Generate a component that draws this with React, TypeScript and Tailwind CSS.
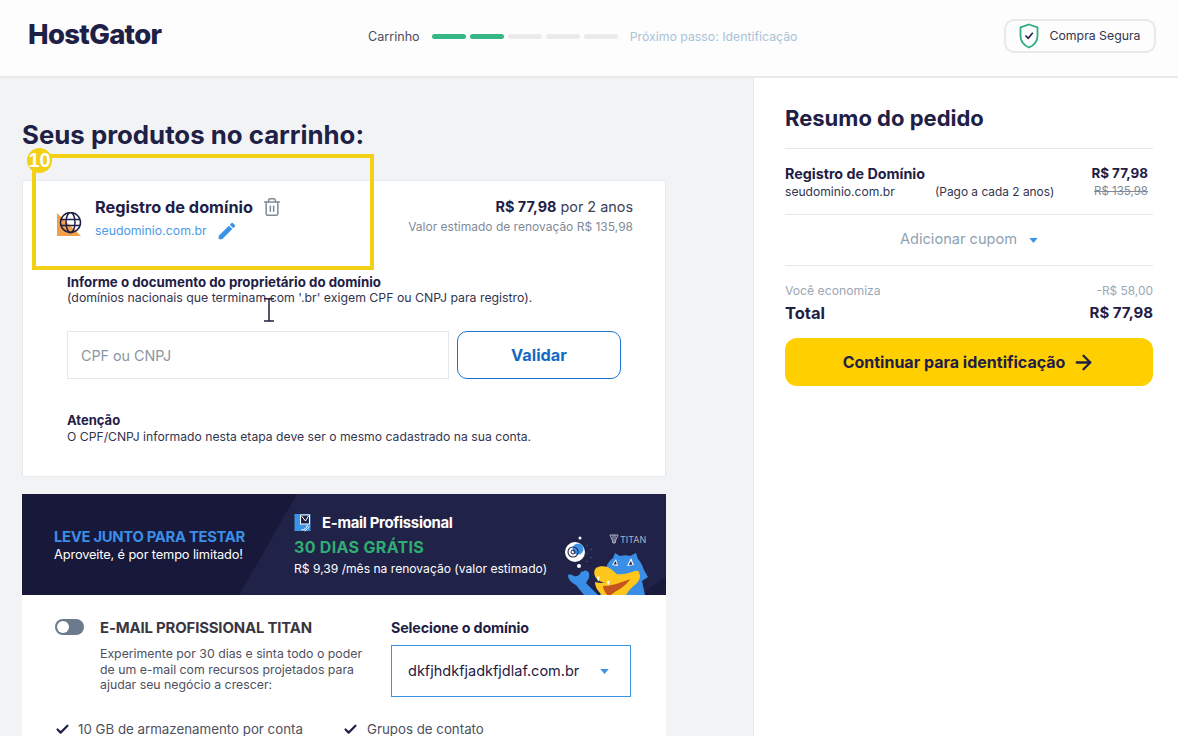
import React from 'react';
import { Check, ArrowRight, Trash2 } from 'lucide-react';

const navy = 'text-[#1f2045]';

function Caret({ className }: { className: string }) {
  return (
    <svg viewBox="0 0 10 6" className={className}>
      <path d="M0 0h10L5 6z" fill="#3b93e8" />
    </svg>
  );
}

function ShieldIcon() {
  return (
    <svg viewBox="0 0 20 26" className="w-[20px] h-[26px]" fill="none" stroke="#2fae7f" strokeWidth="1.8">
      <path d="M10 1.500 18.500 4.500V13C18.500 18.500 14.500 22.500 10 24.500 5.500 22.500 1.500 18.500 1.500 13V4.500Z" />
      <path d="M6.500 12.500 9.200 15.200 13.800 9.800" stroke="#1f2045" strokeWidth="1.600" />
    </svg>
  );
}

function GlobeIcon() {
  return (
    <svg viewBox="0 0 26 26" className="w-[26px] h-[26px] shrink-0 mt-[15px]">
      <path d="M0 1 24 24H0Z" fill="#f0a04b" />
      <g fill="none" stroke="#1f2045" strokeWidth="1.500">
        <circle cx="13.500" cy="10.500" r="10" />
        <ellipse cx="13.500" cy="10.500" rx="4.500" ry="10" />
        <path d="M4 7.500h19M4 13.500h19" />
      </g>
    </svg>
  );
}

function EditIcon() {
  return (
    <svg viewBox="0 0 24 24" className="w-[22px] h-[22px]" fill="#3b93e8">
      <path d="M3 17.250V21h3.750L17.810 9.940l-3.750-3.750L3 17.250zM20.710 7.040a1 1 0 000-1.410l-2.340-2.340a1 1 0 00-1.410 0l-1.830 1.830 3.750 3.750 1.830-1.830z" />
    </svg>
  );
}

function MailIcon() {
  return (
    <svg viewBox="0 0 16 18" className="w-[17px] h-[18px]">
      <rect x="0" y="0" width="16" height="17" fill="#3b93e8" />
      <rect x="6" y="1" width="9" height="9" fill="#1f2045" stroke="#fff" strokeWidth="1" />
      <path d="M7 2l4 5 3-5" fill="none" stroke="#fff" strokeWidth="1" />
      <path d="M7 16c3 0 5-2 6-5M10 17c2-1 4-3 5-5" fill="none" stroke="#fff" strokeWidth="1" />
    </svg>
  );
}

// desenho do mascote, coordenadas em px a partir de (540, 500) da tela
function Gator() {
  return (
    <svg viewBox="0 0 126 95" className="w-[126px] h-[95px]">
      <path d="M126 77 100 95H126Z" fill="#191a3c" />
      {/* bolha do e-mail */}
      <circle cx="40" cy="38" r="1.500" fill="#fff" />
      <circle cx="35" cy="52" r="10" fill="#fff" />
      <circle cx="38" cy="49" r="5.500" fill="#3b93e8" />
      <circle cx="33" cy="52" r="5" fill="none" stroke="#1f2045" strokeWidth="1.100" />
      <circle cx="33" cy="52" r="2" fill="none" stroke="#1f2045" strokeWidth="1" />
      <circle cx="39" cy="66" r="2" fill="#fff" />
      <path d="M47 45v1M51 49v1M47 53v1M51 57v1M47 61v1" stroke="#6a6f90" strokeWidth="1" />
      {/* braço e corpo */}
      <path d="M28 75c2-1 4 0 6 1 3 1 6-1 7-4 1-1 2 0 3-1 2-1 4 0 5 2 1 4-1 7-3 10l12 12H44L36 85c-4-2-8-5-8-10Z" fill="#3b8ee6" />
      <path d="M66 68c1-4 4-8 7-10l2-5 5 3c4-1 7-1 10 0l6-3 2 6c3 3 5 8 6 11l4 7-6 4 3 14H60Z" fill="#3b8ee6" />
      {/* olhos */}
      <path d="M72 65l4-6 2 7Z" fill="#fff" />
      <path d="M73.500 64.500l2.200-3.500 1 3.500Z" fill="#1f2045" />
      <path d="M94 65l-3-7-4 8Z" fill="#fff" />
      <path d="M92.500 64.500l-1.700-3.500-2 4Z" fill="#1f2045" />
      {/* boca */}
      <path d="M55 82c6 2 14 1 24-3 8-3 14-5 20-6 2 3 1 7-3 11-4 3-7 6-10 11H62c-4-4-7-8-7-13Z" fill="#ffc61e" />
      <path d="M63 86c8 0 18-3 28-8-3 5-7 8-11 11-4 2-7 4-9 6h-4c-2-3-4-6-4-9Z" fill="#c4561d" />
      <path d="M56 68c3-2 8-2 11-1 4 1 7 5 10 7 6 1 12-1 18-3 3-1 5 1 4 3-3 3-10 6-18 8-9 2-18 2-23-2-4-3-5-9-2-12Z" fill="#ffc61e" />
      <path d="M57 76l1 6 2-5ZM67 81l1 5 2-5Z" fill="#fff" />
    </svg>
  );
}

function TitanLogo() {
  return (
    <div className="flex items-center gap-[1px] text-[9px] leading-none text-[#aeb3c6]">
      <svg viewBox="0 0 10 10" className="w-[10px] h-[10px]" fill="none" stroke="#aeb3c6" strokeWidth="1">
        <path d="M1 1h8L7 5.500 6 9H4L3 5.500ZM4 1v8M6 1v8" />
      </svg>
      TITAN
    </div>
  );
}

function Highlight() {
  return (
    <div className="absolute left-[32px] top-[154px] w-[342px] h-[116px] border-[4px] border-[#f2d014] pointer-events-none">
      <span className="absolute left-[-9px] top-[-10px] w-[25px] h-[25px] rounded-full bg-[#f2d014] text-white text-[20px] leading-[25px] text-center font-bold font-['Liberation_Sans',sans-serif]">
        10
      </span>
    </div>
  );
}

function IBeam() {
  return (
    <svg viewBox="0 0 14 24" className="absolute left-[262px] top-[298px] w-[14px] h-[24px]" fill="none" stroke="#1f2045" strokeWidth="1.500">
      <path d="M2 .8h10M7 .8v22M2 23h10" />
    </svg>
  );
}

function Steps() {
  return (
    <div className="flex items-center gap-[12px] mt-[-2px]">
      <span className="text-[12.600px] text-[#4a4b5c]">Carrinho</span>
      <div className="flex gap-[4px]">
        <span className="w-[34px] h-[5px] rounded-full bg-[#36b886]" />
        <span className="w-[34px] h-[5px] rounded-full bg-[#36b886]" />
        <span className="w-[34px] h-[5px] rounded-full bg-[#ebebeb]" />
        <span className="w-[34px] h-[5px] rounded-full bg-[#ebebeb]" />
        <span className="w-[34px] h-[5px] rounded-full bg-[#ebebeb]" />
      </div>
      <span className="text-[12.300px] text-[#a9c3d6]">Próximo passo: Identificação</span>
    </div>
  );
}

function DomainCard() {
  return (
    <section className="mt-[30px] h-[297px] bg-white border border-[#e8ebee]">
      <div className="flex justify-between pl-[34px] pr-[32px] pt-[16px] h-[93px]">
        <div className="flex gap-[12px]">
          <GlobeIcon />
          <div>
            <div className="flex items-center gap-[9px] h-[20px]">
              <span className={`text-[16.300px] font-bold ${navy}`}>Registro de domínio</span>
              <Trash2 size={20} strokeWidth={1.800} className="text-[#7f8b9a]" />
            </div>
            <div className="flex items-center gap-[9px] mt-[3px] h-[22px]">
              <span className="text-[12.300px] text-[#4c9ae8]">seudominio.com.br</span>
              <EditIcon />
            </div>
          </div>
        </div>
        <div className="text-right">
          <div className={`text-[14.400px] leading-[20px] ${navy}`}>
            <b className="font-bold">R$ 77,98</b> <span className="text-[#3c3e58]">por 2 anos</span>
          </div>
          <div className="text-[12px] leading-[20px] text-[#7f8b9a]">Valor estimado de renovação R$ 135,98</div>
        </div>
      </div>
      <div className="pl-[44px] pr-[44px]">
        <div className={`text-[13.300px] leading-[16px] font-bold whitespace-nowrap ${navy}`}>Informe o documento do proprietário do domínio</div>
        <div className="text-[12.300px] leading-[15px] whitespace-nowrap text-[#33354f]">(domínios nacionais que terminam com '.br' exigem CPF ou CNPJ para registro).</div>
        <div className="flex gap-[8px] mt-[26px]">
          <div className="w-[382px] h-[48px] border border-[#e3e8ec] flex items-center pl-[13px] pt-[2px] text-[14.300px] text-[#8a96a3]">CPF ou CNPJ</div>
          <button className="w-[164px] h-[48px] rounded-[10px] border border-[#1b74cf] text-[#1469c4] text-[16.300px] font-bold">Validar</button>
        </div>
        <div className={`mt-[34px] text-[13px] leading-[15px] font-bold ${navy}`}>Atenção</div>
        <div className="text-[12.200px] leading-[17px] whitespace-nowrap text-[#33354f]">O CPF/CNPJ informado nesta etapa deve ser o mesmo cadastrado na sua conta.</div>
      </div>
    </section>
  );
}

function TitanBanner() {
  return (
    <div className="relative mt-[17px] h-[101px] bg-[#212248] overflow-hidden flex">
      {/* faixa diagonal escura */}
      <div className="w-[275px] bg-[#18193a] [clip-path:polygon(0_0,100%_0,79%_100%,0_100%)] -mr-[65px] shrink-0 flex flex-col justify-center pl-[32px] pt-[2px]">
        <div className="text-[14.800px] leading-[18px] font-bold text-[#3b8ee6] whitespace-nowrap tracking-[-0.02em]">LEVE JUNTO PARA TESTAR</div>
        <div className="text-[12.800px] leading-[17px] text-white whitespace-nowrap tracking-[-0.01em]">Aproveite, é por tempo limitado!</div>
      </div>
      <div className="pl-[62px] pt-[20px]">
        <div className="flex items-center gap-[11px] text-white text-[14.900px] leading-[18px] font-bold tracking-[-0.02em]">
          <MailIcon />
          E-mail Profissional
        </div>
        <div className="mt-[6px] text-[16px] leading-[18px] font-bold text-[#2fae72] tracking-[0.02em]">30 DIAS GRÁTIS</div>
        <div className="mt-[3px] text-[12.100px] leading-[20px] text-white whitespace-nowrap">R$ 9,39 /mês na renovação (valor estimado)</div>
      </div>
      <div className="absolute left-[518px] top-[6px]">
        <Gator />
      </div>
      <div className="absolute left-[587px] top-[40px]">
        <TitanLogo />
      </div>
    </div>
  );
}

function TitanOffer() {
  return (
    <section className="bg-white h-[141px] overflow-hidden pl-[33px] pr-[34px] pt-[24px]">
      <div className="flex">
        <span className="relative w-[29px] h-[16px] rounded-full bg-[#6b7a8c] shrink-0">
          <span className="absolute left-[2px] top-[2px] w-[12px] h-[12px] rounded-full bg-white" />
        </span>
        <div className="w-[307px] shrink-0 pl-[16px]">
          <div className="text-[14.900px] leading-[18px] font-bold text-[#3a3640] tracking-[-0.01em] whitespace-nowrap">E-MAIL PROFISSIONAL TITAN</div>
          <div className="mt-[9px] w-[275px] text-[12.300px] leading-[15.500px] text-[#4e5060]">
            Experimente por 30 dias e sinta todo o poder de um e-mail com recursos projetados para ajudar seu negócio a crescer:
          </div>
        </div>
        <div className="w-[240px] shrink-0">
          <div className={`text-[14.300px] leading-[18px] font-bold tracking-[-0.01em] whitespace-nowrap ${navy}`}>Selecione o domínio</div>
          <div className="mt-[8px] h-[52px] border border-[#3b93e8] flex items-center justify-between pl-[16px] pr-[21px]">
            <span className={`text-[14.500px] whitespace-nowrap ${navy}`}>dkfjhdkfjadkfjdlaf.com.br</span>
            <Caret className="w-[9px] h-[5px]" />
          </div>
        </div>
      </div>
      <div className="flex mt-[23px] text-[13.300px] leading-[18px] text-[#4e5060]">
        <div className="flex items-center gap-[8px] w-[288px]">
          <Check size={15} strokeWidth={3.500} className="text-[#1f2045]" />
          10 GB de armazenamento por conta
        </div>
        <div className="flex items-center gap-[9px]">
          <Check size={15} strokeWidth={3.500} className="text-[#1f2045]" />
          Grupos de contato
        </div>
      </div>
    </section>
  );
}

function OrderSummary() {
  return (
    <aside className="flex-1 bg-white border-l border-[#e8e8e8] pl-[31px] pr-[25px] pt-[26px]">
      <h2 className={`text-[22px] leading-[28px] font-bold ${navy} pb-[16px] border-b border-[#e8e8e8]`}>Resumo do pedido</h2>
      <div className="h-[66px] border-b border-[#e8e8e8] pt-[16px]">
        <div className={`flex justify-between items-center pr-[5px] leading-[17px] font-bold ${navy}`}>
          <span className="text-[14.300px]">Registro de Domínio</span>
          <span className="text-[13.400px]">R$ 77,98</span>
        </div>
        <div className="flex items-center mt-[1px] pr-[5px] leading-[17px] text-[#33354f]">
          <span className="w-[150px] text-[12.100px]">seudominio.com.br</span>
          <span className="flex-1 text-[11.900px]">(Pago a cada 2 anos)</span>
          <span className="text-[11.500px] line-through text-[#7f8b9a]">R$ 135,98</span>
        </div>
      </div>
      <div className="h-[51px] border-b border-[#e8e8e8] flex items-center justify-center gap-[12px] text-[14.600px] text-[#8ea2b3]">
        Adicionar cupom
        <Caret className="w-[9px] h-[5px]" />
      </div>
      <div className="flex justify-between mt-[17px] leading-[16px] text-[#9aa8b5]">
        <span className="text-[12.200px]">Você economiza</span>
        <span className="text-[11.900px]">-R$ 58,00</span>
      </div>
      <div className={`flex justify-between items-center mt-[4px] leading-[20px] font-bold ${navy}`}>
        <span className="text-[16.500px]">Total</span>
        <span className="text-[15px]">R$ 77,98</span>
      </div>
      <button className={`mt-[15px] w-full h-[48px] rounded-[12px] bg-[#ffcf00] flex items-center justify-center gap-[7px] text-[16px] font-bold ${navy}`}>
        Continuar para identificação
        <ArrowRight size={23} strokeWidth={2.400} />
      </button>
    </aside>
  );
}

export default function App(): React.JSX.Element {
  return (
    <div className="relative w-[1178px] h-[736px] overflow-hidden bg-[#f1f3f5] flex flex-col font-['Inter',sans-serif]">
      {/* Cabeçalho */}
      <header className="h-[78px] shrink-0 bg-[#fdfdfd] border-b-[2px] border-[#e9e9e9] flex items-center pl-[28px] pr-[22px]">
        <div className={`w-[340px] text-[27.500px] font-extrabold tracking-[-0.025em] ${navy} mt-[-6px]`}>HostGator</div>
        <Steps />
        <div className="ml-auto w-[152px] h-[34px] mt-[-5px] rounded-[10px] border-[2px] border-[#e9e9e9] flex items-center justify-center gap-[10px] text-[12.300px] text-[#33354f]">
          <ShieldIcon />
          <span className="pt-[1px]">Compra Segura</span>
        </div>
      </header>

      <div className="flex flex-1 min-h-0">
        {/* Coluna dos produtos */}
        <main className="w-[753px] shrink-0 pl-[22px] pr-[87px] pt-[42px]">
          <h1 className={`text-[25.800px] leading-[30px] font-bold whitespace-nowrap ${navy}`}>Seus produtos no carrinho:</h1>
          <DomainCard />
          <TitanBanner />
          <TitanOffer />
        </main>
        <OrderSummary />
      </div>

      <Highlight />
      <IBeam />
    </div>
  );
}
